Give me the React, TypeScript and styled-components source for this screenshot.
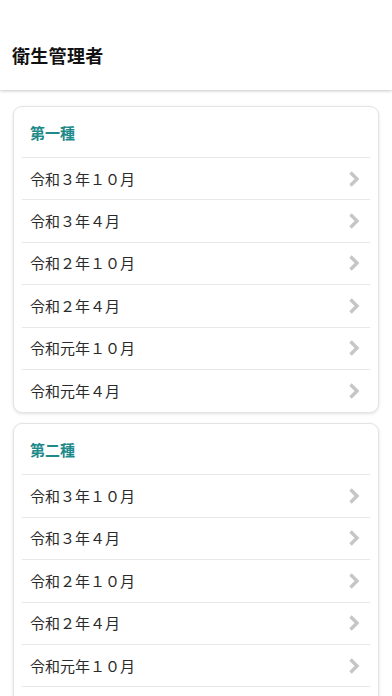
import React from 'react';
import styled, {createGlobalStyle} from 'styled-components';

const sections = [
    {title: '第一種', items: ['令和３年１０月', '令和３年４月', '令和２年１０月', '令和２年４月', '令和元年１０月', '令和元年４月']},
    {title: '第二種', items: ['令和３年１０月', '令和３年４月', '令和２年１０月', '令和２年４月', '令和元年１０月', '令和元年４月']},
];

const GlobalStyle = createGlobalStyle`
    html, body {
        margin: 0;
        padding: 0;
        background: #ffffff;
        font-family: "Noto Sans CJK JP", "Noto Sans", sans-serif;
        color: #222;
    }
`;

const Chevron = () => <ChevronSvg width="12" height="18" viewBox="0 0 12 18" aria-hidden="true">
    <path d="M2.5 2.5l6.5 6.5-6.5 6.5" fill="none" strokeWidth="3.4" strokeLinejoin="miter"/>
</ChevronSvg>;

export default function App() {
    return <Page>
        <GlobalStyle/>
        <Header>
            <Title>衛生管理者</Title>
        </Header>
        <Content>
            {sections.map((section) => <Card key={section.title}>
                <CardTitle>{section.title}</CardTitle>
                {section.items.map((item) => <Row key={item}>
                    <RowLabel>{item}</RowLabel>
                    <Chevron/>
                </Row>)}
            </Card>)}
        </Content>
    </Page>;
}

const Page = styled.div`
    height: 100vh;
    overflow: hidden;
    background: #ffffff;
`;

const Header = styled.header`
    height: 90px;
    display: flex;
    align-items: flex-end;
    padding: 0 12px 23px;
    box-sizing: border-box;
    background: #ffffff;
    box-shadow: 0 1px 3px rgba(0, 0, 0, 0.22);
    position: relative;
    z-index: 1;
`;

const Title = styled.h1`
    margin: 0;
    font-size: 18px;
    font-weight: 600;
    line-height: 24px;
    color: #111;
    letter-spacing: 0.3px;
`;

const Content = styled.main`
    display: flex;
    flex-direction: column;
    gap: 10px;
    padding: 16px 13px 16px;
`;

const Card = styled.section`
    background: #ffffff;
    border: 1px solid #e4e4e4;
    border-radius: 9px;
    box-shadow: 0 1px 3px rgba(0, 0, 0, 0.12);
    padding: 0 8px;
`;

const CardTitle = styled.h2`
    margin: 0;
    height: 50px;
    box-sizing: content-box;
    display: flex;
    align-items: center;
    padding: 0 0 0 8px;
    font-size: 15px;
    font-weight: 700;
    line-height: 1;
    color: #1e8a8a;
    border-bottom: 1px solid #e8e8e8;
`;

const Row = styled.div`
    height: 42.4px;
    box-sizing: border-box;
    display: flex;
    align-items: center;
    justify-content: space-between;
    padding: 0 10px 1px 8px;
    border-bottom: 1px solid #e8e8e8;
    &:last-child {
        border-bottom: none;
    }
`;

const RowLabel = styled.span`
    font-size: 15px;
    line-height: 1;
    color: #2a2a2a;
`;

const ChevronSvg = styled.svg`
    stroke: #c6c6c6;
    margin-top: 1px;
`;
